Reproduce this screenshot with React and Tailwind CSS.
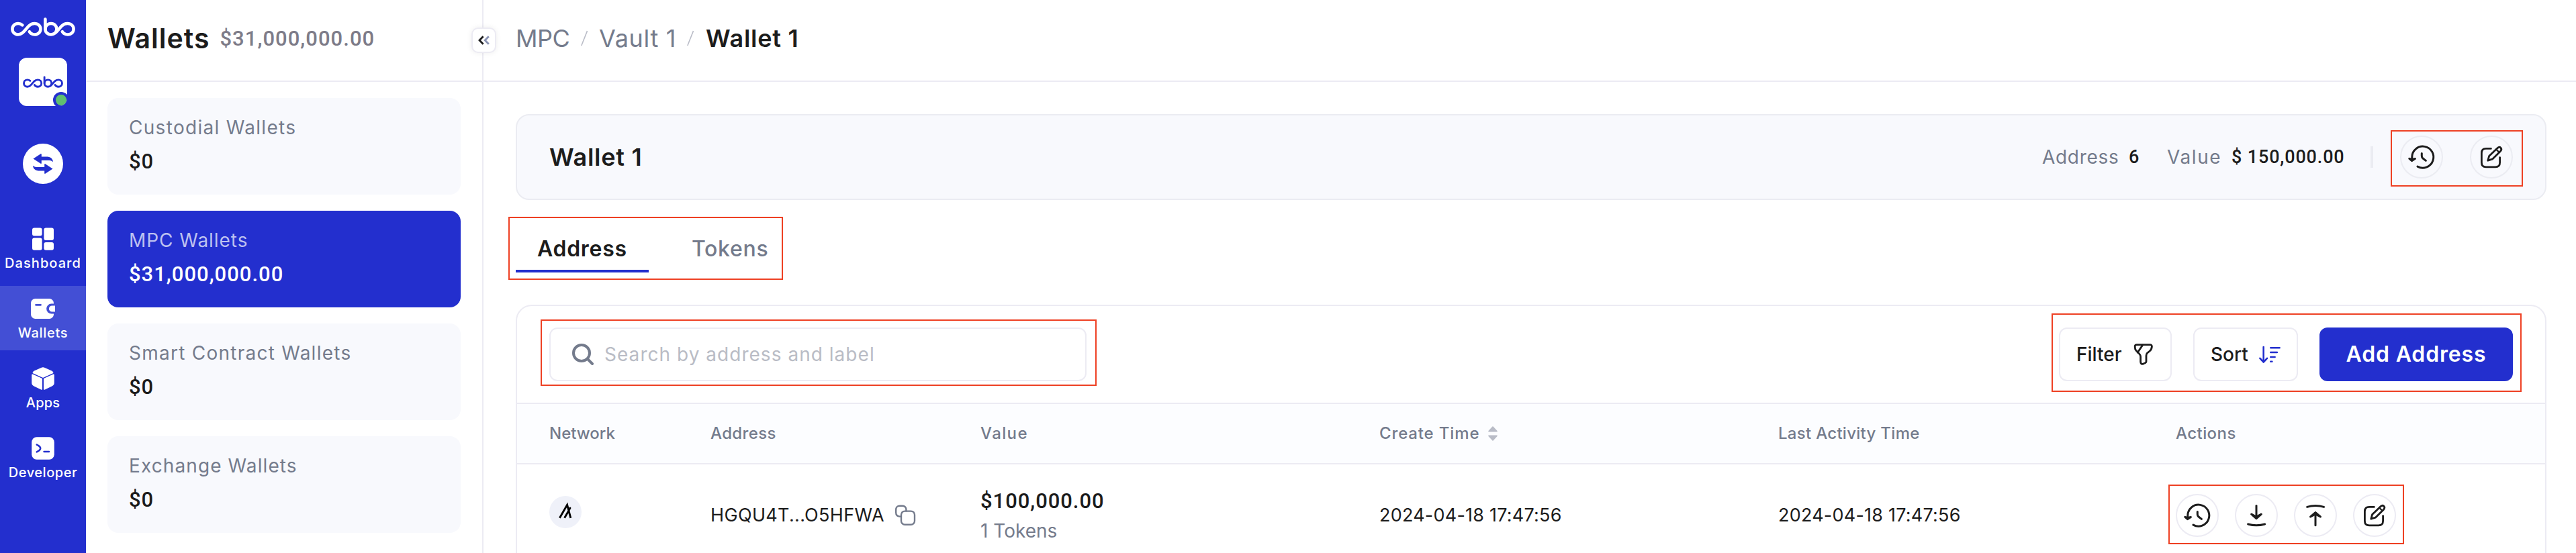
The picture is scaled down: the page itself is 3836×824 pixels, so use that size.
import React from "react";

function CoboLogo({ className }) {
  return (
    <svg viewBox="0 0 96 28" fill="none" stroke="currentColor" strokeWidth="4.6" strokeLinecap="round" strokeLinejoin="round" className={className}>
      <path d="M17.4 11.4C15.6 9.9 13.5 9 11 9 6 9 2.4 12.6 2.4 17.2S6 25.5 11 25.5C15 25.5 17.6 23.4 20 20.6L27 12.6C29.4 10.2 32 9 35.5 9 40.7 9 44.4 12.6 44.4 17.2S40.7 25.5 35.7 25.5C32 25.5 29.2 23.6 27.8 21.2" />
      <path d="M51.4 2.5V17.2C51.4 22 55 25.5 60 25.5 64 25.5 66.6 23.4 69 20.6L76 12.6C78.4 10.2 81 9 84.5 9 89.9 9 93.6 12.6 93.6 17.2S89.9 25.5 84.8 25.5C81 25.5 78.2 23.6 76.8 21.2" />
      <path d="M51.4 17.2C51.4 12.6 55 9 60 9S68.4 12.6 68.4 17.2C68.4 18.8 68 20.2 67.2 21.4" />
    </svg>
  );
}

function SwapIcon() {
  return (
    <svg viewBox="0 0 32 32" className="size-8 shrink-0" fill="currentColor">
      <path d="M1.5 8.5 12.6 1.2C13.2.9 13.8 1.2 13.8 2V5.4H21C27 5.4 30.6 8 31 13.2 28.8 11 26.2 11 23 11H13.8V15C13.8 15.8 13.2 16.1 12.6 15.8Z" />
      <path transform="rotate(180 16 16)" d="M1.5 8.5 12.6 1.2C13.2.9 13.8 1.2 13.8 2V5.4H21C27 5.4 30.6 8 31 13.2 28.8 11 26.2 11 23 11H13.8V15C13.8 15.8 13.2 16.1 12.6 15.8Z" />
    </svg>
  );
}

function DashboardIcon() {
  return (
    <svg viewBox="0 0 36 36" className="size-9 shrink-0" fill="currentColor">
      <rect x="2" y="1.4" width="14.6" height="12" rx="3" />
      <rect x="19.4" y="1.4" width="14.6" height="18.6" rx="3" />
      <rect x="2" y="16.4" width="14.6" height="18.4" rx="3" />
      <rect x="19.4" y="23" width="14.6" height="11.8" rx="3" />
    </svg>
  );
}

function WalletIcon() {
  return (
    <svg viewBox="0 0 40 36" className="h-9 w-10 shrink-0">
      <rect x="2" y="3" width="34" height="30" rx="6.5" fill="currentColor" />
      <path d="M9.5 12.3H16.5" stroke="#434fd5" strokeWidth="2.8" strokeLinecap="round" />
      <path d="M39 10.6H32.5a7.4 7.4 0 0 0 0 14.8H39Z" fill="#434fd5" />
      <path d="M38 13.4H33.5a4.6 4.6 0 0 0 0 9.2H38Z" fill="currentColor" />
    </svg>
  );
}

function AppsIcon() {
  return (
    <svg viewBox="0 0 36 36" className="size-9 shrink-0" fill="currentColor" stroke="currentColor" strokeWidth="2" strokeLinejoin="round">
      <path d="M18 2.2Q19.2 2.2 20.4 2.8L30.6 7.4Q31.8 8.2 32.4 9.4L18 15.8 3.6 9.4Q4.2 8.2 5.4 7.4L15.6 2.8Q16.8 2.2 18 2.2Z" />
      <path d="M2.2 12.4 16 18.6V33.8L4.6 28.4Q2.2 27.2 2.2 24.6Z" />
      <path d="M33.8 12.4 20 18.6V33.8L31.4 28.4Q33.8 27.2 33.8 24.6Z" />
    </svg>
  );
}

function DeveloperIcon() {
  return (
    <svg viewBox="0 0 36 36" className="size-9 shrink-0">
      <rect x="1.2" y="1.2" width="33.6" height="33.6" rx="7.5" fill="currentColor" />
      <path d="M8.8 12.6Q14.2 15.2 14.2 18T8.8 23.4M19.6 23H27" fill="none" stroke="#232fce" strokeWidth="2.6" strokeLinecap="round" />
    </svg>
  );
}

function SearchIcon() {
  return (
    <svg viewBox="0 0 32 32" className="size-8 shrink-0" fill="none" stroke="currentColor" strokeWidth="4" strokeLinecap="round">
      <circle cx="14" cy="14" r="12" />
      <path d="M23 23 30 30" />
    </svg>
  );
}

function FilterIcon() {
  return (
    <svg viewBox="0 0 32 32" className="size-8 shrink-0" fill="none" stroke="currentColor" strokeWidth="2.8" strokeLinecap="round" strokeLinejoin="round">
      <path d="M6 1.6H25.5Q28.6 1.6 28.4 4.6C28.2 7.6 27.6 9 25 11.2L21.6 14Q20 15.6 20 18V26.6Q20 28 18.6 28.8L15.8 30.1Q12 31.2 11.6 27.4V19.6Q11.6 17.4 9.8 15.4L5 10.4Q3.2 8.4 3.2 5V4.4Q3.2 1.6 6 1.6Z" />
      <path d="M14.6 2.2 7.2 13.2" />
    </svg>
  );
}

function SortIcon() {
  return (
    <svg viewBox="0 0 36 32" className="h-8 w-9 shrink-0" fill="none" stroke="currentColor" strokeWidth="2.6" strokeLinecap="round" strokeLinejoin="round">
      <path d="M8.7 5V27.4M3.4 21.8 8.7 27.6 14 21.8" />
      <path d="M19.3 6.3H32.6M19.3 13H28.8M19.3 20H25.6M19.3 26.8H21.4" />
    </svg>
  );
}

function CopyIcon() {
  return (
    <svg viewBox="0 0 32 32" className="size-8 shrink-0" fill="none" stroke="currentColor" strokeWidth="2.4" strokeLinecap="round" strokeLinejoin="round">
      <rect x="10" y="9.6" width="20" height="20.2" rx="5.5" />
      <path d="M9.6 17.6H8Q2.2 17.4 2.2 11.8V7.6Q2.2 1.8 8 1.8H11.6Q16.4 1.8 17.4 6.4V9.4" />
    </svg>
  );
}

function SorterIcon() {
  return (
    <svg viewBox="0 0 16 24" className="h-6 w-4 shrink-0" fill="#b9bcc7" stroke="#b9bcc7" strokeWidth="1.6" strokeLinejoin="round">
      <path d="M8 2 14 8.6H2ZM8 22 14 15.4H2Z" />
    </svg>
  );
}

const actionShapes = {
  history: (
    <>
      <path d="M17.8 37V32A16 16 0 1 1 26 46.1" />
      <path d="M13.8 34.4 17.6 37.6 22.4 34.4 17.9 35.4Z" />
      <path d="M32.3 26.4V30.4Q32.3 32.6 34 34L38.4 37.4" />
    </>
  ),
  receive: (
    <>
      <path d="M32 17.4V36" />
      <path d="M24.6 30.2 32 36.6 39.4 30.2 32 34Z" />
      <path d="M19.6 45Q32 48.6 44.6 45" />
    </>
  ),
  send: (
    <>
      <path d="M32 46.8V28" />
      <path d="M24.6 34 32 27.6 39.4 34 32 30.2Z" />
      <path d="M19.6 19.4Q32 15.8 44.6 19.4" />
    </>
  ),
  edit: (
    <g strokeWidth="2.8">
      <path d="M31.4 19.4H24Q17.4 19.4 17.4 26V40.2Q17.4 46.8 24 46.8H38Q44.6 46.8 44.6 40.2V32.6" />
      <path d="M26.8 37.2 28.6 30.6 41.2 18.6Q43.8 16.2 45.9 18.2T45.6 23.2L33.4 35.2Z" />
      <path d="M39.2 20.6 43.6 25" strokeWidth="2.2" />
    </g>
  ),
};

function ActionButton({ kind, border }) {
  return (
    <button className={`size-16 shrink-0 rounded-full border-2 ${border}`}>
      <svg viewBox="2 2 60 60" className="size-15" fill="none" stroke="#1c1c1c" strokeWidth="3" strokeLinecap="round" strokeLinejoin="round">
        {actionShapes[kind]}
      </svg>
    </button>
  );
}

function NavItem({ icon, label, active, tracking }) {
  return (
    <div className={`flex h-24 w-full flex-col items-center pt-4 ${active ? "bg-[#434fd5]" : ""}`}>
      {icon}
      <span className={`mt-1.5 text-xl leading-6 font-medium whitespace-nowrap ${tracking}`}>{label}</span>
    </div>
  );
}

function WalletCard({ title, value, active, tracking }) {
  return (
    <div className={`h-36 rounded-2xl px-8 pt-6 ${active ? "bg-[#232fce]" : "bg-[#f8f9fd]"}`}>
      <div className={`text-[28px] leading-10 ${tracking} ${active ? "text-[#bdc1f0]" : "text-[#747b8c]"}`}>{title}</div>
      <div className={`mt-[11px] font-['Roboto',sans-serif] text-[31px] leading-10 font-medium tracking-[1px] ${active ? "text-white" : "text-[#1c1c1c]"}`}>{value}</div>
    </div>
  );
}

function Highlight({ className }) {
  return <div className={`pointer-events-none absolute border-2 border-[#ee4023] ${className}`} />;
}

export default function App() {
  return (
    <div className="relative flex h-[824px] w-[3836px] overflow-hidden bg-white font-['Inter',sans-serif] text-[#1c1c1c]">
      <aside className="flex w-32 shrink-0 flex-col items-center bg-[#232fce] pt-[26px] text-white">
        <CoboLogo className="h-7 w-24 shrink-0" />
        <div className="relative mt-8 flex size-18 shrink-0 items-center justify-center overflow-hidden rounded-xl bg-white text-[#232fce]">
          <CoboLogo className="h-[18px] w-[60px] shrink-0" />
          <span className="absolute top-[50.5px] left-[50.5px] size-6 rounded-full border-4 border-[#232fce] bg-[#5fbf70]" />
        </div>
        <div className="mt-14 flex size-15 shrink-0 items-center justify-center rounded-full bg-white text-[#232fce]">
          <SwapIcon />
        </div>
        <nav className="mt-12 flex w-full flex-col gap-2">
          <NavItem icon={<DashboardIcon />} label="Dashboard" tracking="tracking-[1.07px]" />
          <NavItem icon={<WalletIcon />} label="Wallets" tracking="tracking-[0.7px]" active />
          <NavItem icon={<AppsIcon />} label="Apps" tracking="tracking-[0.2px]" />
          <NavItem icon={<DeveloperIcon />} label="Developer" tracking="tracking-[0.54px]" />
        </nav>
      </aside>

      <section className="w-[592px] shrink-0 border-r-2 border-[#ecebf3]">
        <header className="flex h-[122px] items-center border-b-2 border-[#ecebf3] pb-1.5 pl-8 whitespace-nowrap">
          <h1 className="text-[41px] leading-none font-semibold tracking-[1px]">Wallets</h1>
          <span className="mt-0.5 ml-[15px] font-['Roboto',sans-serif] text-[31px] font-medium tracking-[1.03px] text-[#7d7b88]">$31,000,000.00</span>
        </header>
        <div className="flex flex-col gap-6 py-6 pr-8 pl-8">
          <WalletCard title="Custodial Wallets" value="$0" tracking="tracking-[1.3px]" />
          <WalletCard title="MPC Wallets" value="$31,000,000.00" tracking="tracking-[0.95px]" active />
          <WalletCard title="Smart Contract Wallets" value="$0" tracking="tracking-[1.25px]" />
          <WalletCard title="Exchange Wallets" value="$0" tracking="tracking-[1.1px]" />
        </div>
      </section>

      <main className="min-w-0 flex-1">
        <header className="flex h-[122px] items-center border-b-2 border-[#ecebf3] pb-1.5 pl-12 text-4xl leading-none whitespace-nowrap text-[#747b8c]">
          <span className="w-[97px] tracking-[-0.5px]">MPC</span>
          <svg viewBox="0 0 10 24" className="h-6 w-2.5" stroke="#b9bcc7" strokeWidth="1.6"><path d="M9.5 1 .8 23" /></svg>
          <span className="ml-[17px] w-[131px] tracking-[0.67px]">Vault 1</span>
          <svg viewBox="0 0 10 24" className="h-6 w-2.5" stroke="#b9bcc7" strokeWidth="1.6"><path d="M9.5 1 .8 23" /></svg>
          <span className="ml-[18px] font-semibold tracking-[0.75px] text-[#1c1c1c]">Wallet 1</span>
        </header>

        <div className="pt-12 pr-11 pl-12">
          <div className="flex h-32 items-center rounded-[20px] border-2 border-[#ebecf2] bg-[#f8f9fd] pr-12 pl-12 text-[28px] whitespace-nowrap">
            <h2 className="flex-1 text-4xl font-semibold tracking-[0.75px]">Wallet 1</h2>
            <span className="w-[129px] tracking-[0.7px] text-[#747b8c]">Address</span>
            <span className="w-[57px] font-['Roboto',sans-serif] text-[27px] font-medium">6</span>
            <span className="w-[96px] tracking-[1.6px] text-[#747b8c]">Value</span>
            <span className="w-[167px] font-['Roboto',sans-serif] text-[27px] font-medium tracking-[0.85px]">$ 150,000.00</span>
            <span className="mx-10 h-8 w-1 bg-[#ebecf2]" />
            <div className="flex gap-10">
              <ActionButton kind="history" border="border-[#ebecf2]" />
              <ActionButton kind="edit" border="border-[#ebecf2]" />
            </div>
          </div>

          <div className="mt-9 flex gap-8 text-[32px]">
            <div className="flex h-[72px] w-[198px] items-center border-b-4 border-[#232fce] pt-1.5 pl-8 font-semibold tracking-[0.7px]">Address</div>
            <div className="flex h-[72px] items-center border-b-4 border-transparent px-8 pt-1.5 font-medium tracking-[0.7px] text-[#747b8c]">Tokens</div>
          </div>

          <div className="mt-12 h-[420px] rounded-t-3xl border-2 border-[#ecebf3]">
            <div className="flex items-center gap-8 border-b-2 border-[#ecebf3] px-12 py-8 text-[28px]">
              <div className="flex h-20 w-[800px] items-center rounded-xl border-2 border-[#ecebf3] pl-8 text-[#747b8c]">
                <SearchIcon />
                <span className="ml-4 tracking-[1.03px] text-[#b9bcc5]">Search by address and label</span>
              </div>
              <div className="flex-1" />
              <button className="flex h-20 w-[168px] items-center rounded-xl border-2 border-[#ecebf3] pl-6 font-medium">
                <span className="w-[84px] text-left">Filter</span>
                <FilterIcon />
              </button>
              <button className="flex h-20 w-[156px] items-center rounded-xl border-2 border-[#ecebf3] pl-6 font-medium">
                <span className="w-[70px] text-left">Sort</span>
                <span className="text-[#232fce]"><SortIcon /></span>
              </button>
              <button className="h-20 w-[288px] rounded-xl bg-[#232fce] text-[32px] font-semibold tracking-[0.85px] text-white">Add Address</button>
            </div>

            <div className="grid h-[90px] grid-cols-[240px_402px_594px_594px_592px_1fr] items-center border-b-2 border-[#ecebf3] bg-[#fcfdff] px-12 text-2xl font-medium text-[#747b8c]">
              <span>Network</span>
              <span className="tracking-[0.35px]">Address</span>
              <span className="tracking-[1.4px]">Value</span>
              <span className="flex items-center gap-3 tracking-[0.86px]">Create Time <SorterIcon /></span>
              <span className="tracking-[0.29px]">Last Activity Time</span>
              <span className="tracking-[0.43px]">Actions</span>
            </div>

            <div className="grid h-[152px] grid-cols-[240px_402px_594px_594px_592px_1fr] items-center px-12 text-[27px]">
              <svg viewBox="0 0 48 48" className="mb-2.5 size-12">
                <circle cx="24" cy="24" r="24" fill="#eff1f9" />
                <path d="M15.4 32.8 26.6 13.2 31.8 32.8M22.6 32.8 30.2 19.6M29.6 18.2H32.2" fill="none" stroke="#000" strokeWidth="2.9" />
              </svg>
              <span className="flex items-center gap-[15px] tracking-[0.34px]">
                HGQU4T...O5HFWA
                <span className="text-[#747b8c]"><CopyIcon /></span>
              </span>
              <div className="flex flex-col pt-0.5">
                <span className="font-['Roboto',sans-serif] text-[31px] leading-[44px] font-medium tracking-[0.95px]">$100,000.00</span>
                <span className="text-[28px] leading-[44px] text-[#747b8c]">1 Tokens</span>
              </div>
              <span className="tracking-[0.22px]">2024-04-18 17:47:56</span>
              <span className="tracking-[0.22px]">2024-04-18 17:47:56</span>
              <div className="flex gap-6">
                <ActionButton kind="history" border="border-[#ecebf3]" />
                <ActionButton kind="receive" border="border-[#ecebf3]" />
                <ActionButton kind="send" border="border-[#ecebf3]" />
                <ActionButton kind="edit" border="border-[#ecebf3]" />
              </div>
            </div>
          </div>
        </div>
      </main>

      <button className="absolute top-[41px] left-[702px] flex h-[38px] w-[37px] items-center justify-center rounded-[10px] border-2 border-[#ecebf3] bg-white shadow-[0_0_8px_rgba(0,0,0,0.07)]">
        <svg viewBox="0 0 20 16" className="h-4 w-5 shrink-0" fill="none" strokeWidth="2.8">
          <path d="M8.6 2.2 3 8 8.6 13.8" stroke="#1c1c1c" />
          <path d="M16.8 2.2 11.2 8 16.8 13.8" stroke="#8a93b3" />
        </svg>
      </button>

      <Highlight className="top-[323px] left-[757px] h-[94px] w-[409px]" />
      <Highlight className="top-[476px] left-[805px] h-[99px] w-[828px]" />
      <Highlight className="top-[194px] left-[3560px] h-[84px] w-[197px]" />
      <Highlight className="top-[467px] left-[3055px] h-[117px] w-[700px]" />
      <Highlight className="top-[722px] left-[3229px] h-[89px] w-[351px]" />
    </div>
  );
}
